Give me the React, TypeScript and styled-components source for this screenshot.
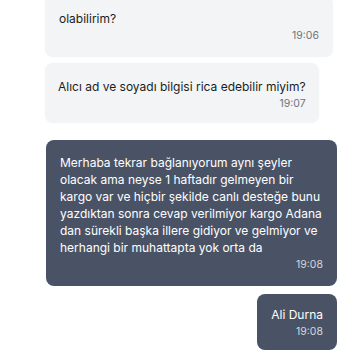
import React from "react";
import styled, { createGlobalStyle } from "styled-components";

const GlobalStyle = createGlobalStyle`
    html, body {
        margin: 0;
        padding: 0;
        background: #ffffff;
        overflow: hidden;
    }
    body {
        font-family: Inter, "Noto Sans", "Liberation Sans", sans-serif;
        -webkit-font-smoothing: antialiased;
    }
`;

const Thread = styled.div`
    width: 350px;
    box-sizing: border-box;
    margin-top: -4px;
    padding: 0 13px 0 45px;
    display: flex;
    flex-direction: column;
`;

const Row = styled.div<{ $mine?: boolean; $gap: number }>`
    display: flex;
    justify-content: ${(p) => (p.$mine ? "flex-end" : "flex-start")};
    margin-top: ${(p) => p.$gap}px;
`;

const Bubble = styled.div<{ $mine?: boolean; $fill?: boolean; $pad?: string }>`
    box-sizing: border-box;
    max-width: 291px;
    width: ${(p) => (p.$fill ? "288px" : "auto")};
    padding: ${(p) => p.$pad || "14px 14px 13px 14px"};
    border-radius: 8px;
    background: ${(p) => (p.$mine ? "#4a5366" : "#f3f4f5")};
    color: ${(p) => (p.$mine ? "#ffffff" : "#1a1d24")};
    box-shadow: ${(p) => (p.$mine ? "none" : "0 0 2px rgba(0, 0, 0, 0.04)")};
`;

const Body = styled.div`
    font-size: 12px;
    line-height: 17px;
`;

const Time = styled.div<{ $mine?: boolean }>`
    margin-top: 2px;
    text-align: right;
    font-size: 10.5px;
    line-height: 13px;
    color: ${(p) => (p.$mine ? "#d3d7de" : "#6f7480")};
`;

type Message = {
    text: string;
    time: string;
    mine?: boolean;
    fill?: boolean;
    gap: number;
    pad?: string;
};

const messages: Message[] = [
    { text: "olabilirim?", time: "19:06", fill: true, gap: 0, pad: "14px 14px 15px 14px" },
    { text: "Alıcı ad ve soyadı bilgisi rica edebilir miyim?", time: "19:07", gap: 6, pad: "15px 13px 13px 13px" },
    {
        text: "Merhaba tekrar bağlanıyorum aynı şeyler olacak ama neyse 1 haftadır gelmeyen bir kargo var ve hiçbir şekilde canlı desteğe bunu yazdıktan sonra cevap verilmiyor kargo Adana dan sürekli başka illere gidiyor ve gelmiyor ve herhangi bir muhattapta yok orta da",
        time: "19:08",
        mine: true,
        gap: 17,
        pad: "14px 14px 15px 14px",
    },
    { text: "Ali Durna", time: "19:08", mine: true, gap: 8, pad: "12px 14px 12px 14px" },
];

const App = () => {
    return (
        <>
            <GlobalStyle />
            <Thread>
                {messages.map((m, i) => (
                    <Row key={i} $mine={m.mine} $gap={m.gap}>
                        <Bubble $mine={m.mine} $fill={m.fill} $pad={m.pad}>
                            <Body>{m.text}</Body>
                            <Time $mine={m.mine}>{m.time}</Time>
                        </Bubble>
                    </Row>
                ))}
            </Thread>
        </>
    );
};

export default App;
